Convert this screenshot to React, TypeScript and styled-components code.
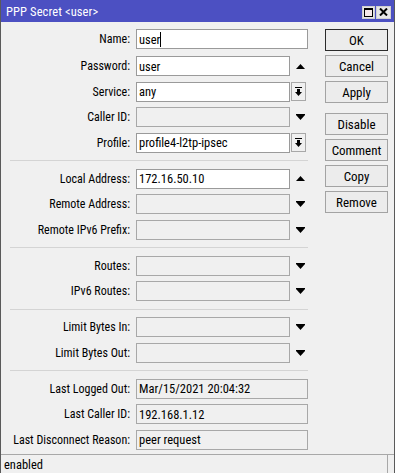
import styled, { createGlobalStyle } from "styled-components";

const GlobalStyle = createGlobalStyle`
  html, body {
    margin: 0;
    padding: 0;
    background: #f0f0f0;
  }
  body {
    font-family: "Roboto Condensed", "Liberation Sans", Arial, sans-serif;
    font-size: 12px;
    color: #000;
  }
`;

type FieldKind = "edit" | "empty" | "readonly";
type Trail = "none" | "up" | "down" | "menu";

interface FieldDef {
  label: string;
  value?: string;
  kind: FieldKind;
  trail: Trail;
  caret?: boolean;
}

const groups: FieldDef[][] = [
  [
    { label: "Name:", value: "user", kind: "edit", trail: "none", caret: true },
    { label: "Password:", value: "user", kind: "edit", trail: "up" },
    { label: "Service:", value: "any", kind: "edit", trail: "menu" },
    { label: "Caller ID:", kind: "empty", trail: "down" },
    { label: "Profile:", value: "profile4-l2tp-ipsec", kind: "edit", trail: "menu" },
  ],
  [
    { label: "Local Address:", value: "172.16.50.10", kind: "edit", trail: "up" },
    { label: "Remote Address:", kind: "empty", trail: "down" },
    { label: "Remote IPv6 Prefix:", kind: "empty", trail: "down" },
  ],
  [
    { label: "Routes:", kind: "empty", trail: "down" },
    { label: "IPv6 Routes:", kind: "empty", trail: "down" },
  ],
  [
    { label: "Limit Bytes In:", kind: "empty", trail: "down" },
    { label: "Limit Bytes Out:", kind: "empty", trail: "down" },
  ],
  [
    { label: "Last Logged Out:", value: "Mar/15/2021 20:04:32", kind: "readonly", trail: "none" },
    { label: "Last Caller ID:", value: "192.168.1.12", kind: "readonly", trail: "none" },
    { label: "Last Disconnect Reason:", value: "peer request", kind: "readonly", trail: "none" },
  ],
];

const buttons: { text: string; main?: boolean; spaced?: boolean }[] = [
  { text: "OK", main: true },
  { text: "Cancel" },
  { text: "Apply" },
  { text: "Disable", spaced: true },
  { text: "Comment" },
  { text: "Copy" },
  { text: "Remove" },
];

function UpArrow() {
  return (
    <svg width="9" height="5" viewBox="0 0 9 5">
      <polygon points="4.5,0 9,5 0,5" fill="#000" />
    </svg>
  );
}

function DownArrow() {
  return (
    <svg width="9" height="6" viewBox="0 0 9 6">
      <polygon points="0,0 9,0 9,1 4.5,6 0,1" fill="#000" />
    </svg>
  );
}

function MenuIcon() {
  return (
    <svg width="7" height="9" viewBox="0 0 7 9">
      <rect x="0" y="0" width="7" height="1" fill="#000" />
      <rect x="2" y="2" width="3" height="3" fill="#000" />
      <polygon points="0,5 7,5 3.5,9" fill="#000" />
    </svg>
  );
}

function MaximizeIcon() {
  return (
    <svg width="9" height="9" viewBox="0 0 9 9">
      <rect x="0.5" y="0.5" width="8" height="8" fill="#f6e9e9" stroke="#000" />
      <rect x="0" y="0" width="9" height="2" fill="#000" />
    </svg>
  );
}

function CloseIcon() {
  return (
    <svg width="9" height="8" viewBox="0 0 9 8">
      <path d="M1 0.5 L8 7.5 M8 0.5 L1 7.5" stroke="#000" strokeWidth="2" />
    </svg>
  );
}

function Field({ def }: { def: FieldDef }) {
  const narrow = def.trail !== "none";
  return (
    <Row>
      <Label>{def.label}</Label>
      <Input $kind={def.kind} $narrow={narrow}>
        {def.value}
        {def.caret && <Caret />}
      </Input>
      {def.trail === "up" && (
        <ArrowSlot>
          <UpArrow />
        </ArrowSlot>
      )}
      {def.trail === "down" && (
        <ArrowSlot>
          <DownArrow />
        </ArrowSlot>
      )}
      {def.trail === "menu" && (
        <MenuButton>
          <MenuIcon />
        </MenuButton>
      )}
    </Row>
  );
}

export default function App() {
  return (
    <>
      <GlobalStyle />
      <Window>
        <TitleBar>
          <Title>PPP Secret &lt;user&gt;</Title>
          <TitleButtons>
            <TitleButton $wide={false}>
              <MaximizeIcon />
            </TitleButton>
            <TitleButton $wide>
              <CloseIcon />
            </TitleButton>
          </TitleButtons>
        </TitleBar>
        <Body>
          <Form>
            {groups.map((group, gi) => (
              <Group key={gi}>
                {gi > 0 && <Separator />}
                {group.map((def) => (
                  <Field key={def.label} def={def} />
                ))}
              </Group>
            ))}
          </Form>
          <ButtonColumn>
            {buttons.map((b) => (
              <Button key={b.text} $main={b.main} $spaced={b.spaced}>
                {b.text}
              </Button>
            ))}
          </ButtonColumn>
        </Body>
        <StatusBar>
          <StatusCell>enabled</StatusCell>
        </StatusBar>
      </Window>
    </>
  );
}

const Window = styled.div`
  width: 395px;
  height: 473px;
  display: flex;
  flex-direction: column;
  box-sizing: border-box;
  border-left: 1px solid #5a5a5a;
  border-right: 1px solid #5a5a5a;
  overflow: hidden;
`;

const TitleBar = styled.div`
  height: 22px;
  flex: none;
  margin: 0 -1px;
  display: flex;
  align-items: center;
  justify-content: space-between;
  padding: 0 4px 0 6px;
  background: #4c50c2;
  color: #fff;
`;

const Title = styled.span`
  font-size: 12.5px;
  letter-spacing: 0.1px;
`;

const TitleButtons = styled.div`
  display: flex;
  gap: 1px;
  margin-top: 2px;
`;

const TitleButton = styled.div<{ $wide: boolean }>`
  width: ${(p) => (p.$wide ? 15 : 13)}px;
  height: 13px;
  box-sizing: border-box;
  display: flex;
  align-items: center;
  justify-content: center;
  background: #e6e6e6;
  border: 1px solid #d0d0d0;
`;

const Body = styled.div`
  flex: 1;
  display: flex;
  padding-top: 7px;
  gap: 17px;
`;

const Form = styled.div`
  width: 307px;
  display: flex;
  flex-direction: column;
  gap: 5.5px;
`;

const Group = styled.div`
  display: flex;
  flex-direction: column;
  gap: 5.5px;

  &:first-child > :first-child {
    margin-bottom: 1.5px;
  }
`;

const Separator = styled.div`
  height: 5px;
  margin-left: 9px;
  display: flex;
  align-items: center;

  &::after {
    content: "";
    flex: 1;
    border-top: 1px solid #d4d4d4;
  }
`;

const Row = styled.div`
  display: flex;
  align-items: center;
  height: 20px;
`;

const Label = styled.div`
  width: 135px;
  flex: none;
  box-sizing: border-box;
  padding-right: 6px;
  text-align: right;
  font-size: 12px;
  white-space: nowrap;
`;

const Input = styled.div<{ $kind: FieldKind; $narrow: boolean }>`
  width: ${(p) => (p.$narrow ? 154 : 172)}px;
  height: 20px;
  flex: none;
  box-sizing: border-box;
  padding: 0 2px;
  display: flex;
  align-items: center;
  border: 1px solid ${(p) => (p.$kind === "edit" ? "#9a9a9a" : "#a8a8a8")};
  background: ${(p) => (p.$kind === "edit" ? "#ffffff" : "#f0f0f0")};
  font-size: 12.5px;
  white-space: nowrap;
`;

const Caret = styled.span`
  display: inline-block;
  width: 1px;
  height: 15px;
  background: #000;
`;

const ArrowSlot = styled.div`
  width: 20px;
  flex: none;
  display: flex;
  align-items: center;
  justify-content: center;
`;

const MenuButton = styled.div`
  width: 15px;
  height: 19px;
  margin-left: 1px;
  flex: none;
  box-sizing: border-box;
  display: flex;
  align-items: center;
  justify-content: center;
  border: 1px solid #a8a8a8;
  background: #f0f0f0;
`;

const ButtonColumn = styled.div`
  display: flex;
  flex-direction: column;
  gap: 4px;
`;

const Button = styled.div<{ $main?: boolean; $spaced?: boolean }>`
  width: 63px;
  height: 22px;
  box-sizing: border-box;
  margin-top: ${(p) => (p.$spaced ? 6 : 0)}px;
  display: flex;
  align-items: center;
  justify-content: center;
  border: 1px solid ${(p) => (p.$main ? "#2b2b2b" : "#a3a3a3")};
  background: #ececec;
  font-size: 13px;
`;

const StatusBar = styled.div`
  height: 19px;
  flex: none;
  display: flex;
  border-top: 1px solid #a8a8a8;
  box-sizing: border-box;
`;

const StatusCell = styled.div`
  width: 387px;
  box-sizing: border-box;
  padding-left: 3px;
  border-right: 1px solid #a8a8a8;
  display: flex;
  align-items: center;
  font-size: 12.5px;
`;
